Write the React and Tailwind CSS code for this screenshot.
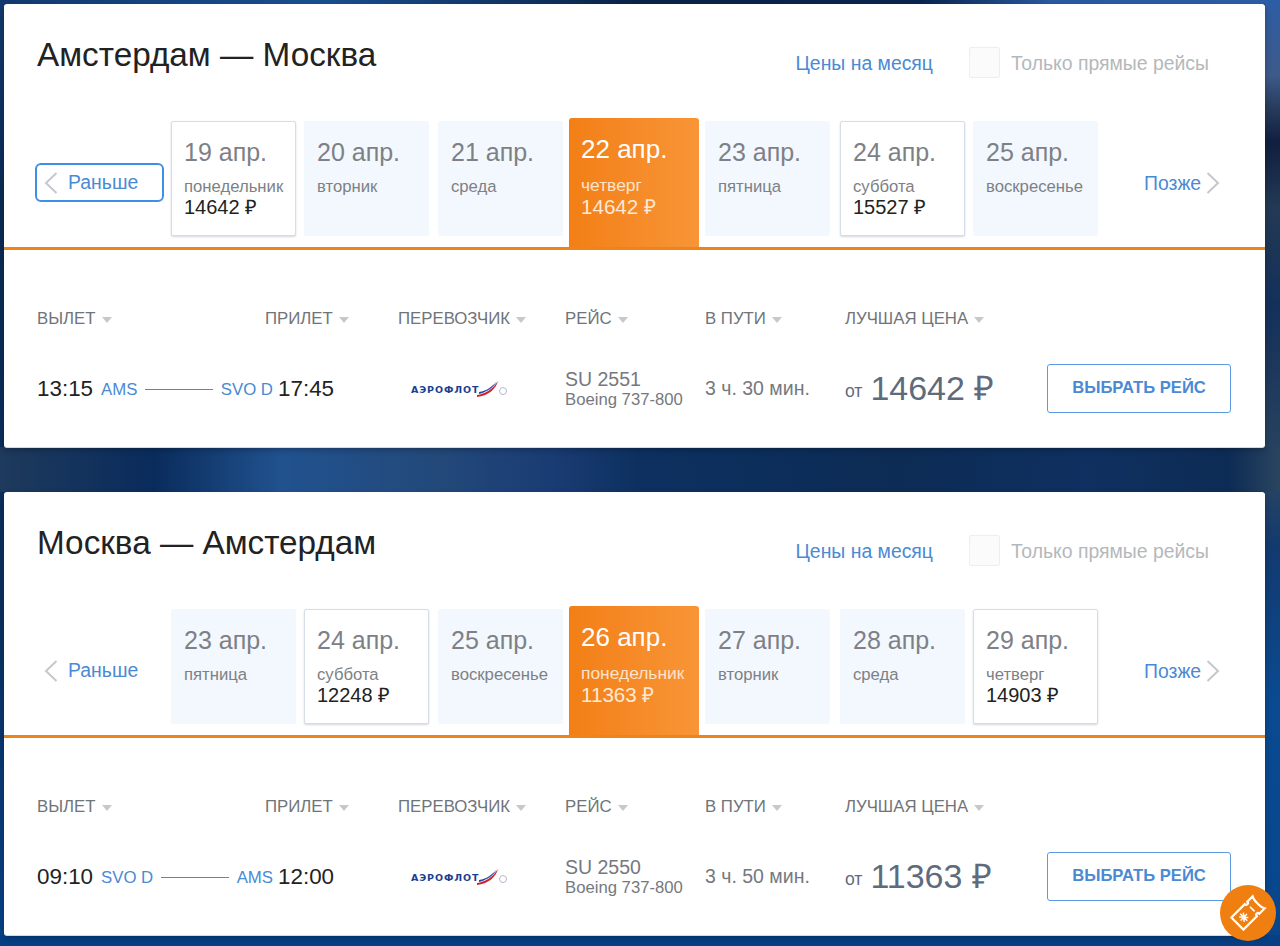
import { useId } from 'react';

const font = { fontFamily: '"Liberation Sans", Arial, sans-serif' };

const flights = [
  {
    title: 'Амстердам — Москва',
    focused: true,
    days: [
      { date: '19 апр.', day: 'понедельник', price: '14642 ₽', ml: 'ml-[7px]' },
      { date: '20 апр.', day: 'вторник', ml: 'ml-[8px]' },
      { date: '21 апр.', day: 'среда', ml: 'ml-[9px]' },
      { date: '22 апр.', day: 'четверг', price: '14642 ₽', active: true },
      { date: '23 апр.', day: 'пятница', ml: 'ml-[6px]' },
      { date: '24 апр.', day: 'суббота', price: '15527 ₽', ml: 'ml-[10px]' },
      { date: '25 апр.', day: 'воскресенье', ml: 'ml-[8px]' },
    ],
    depart: '13:15', from: 'AMS', to: 'SVO D', arrive: '17:45',
    flight: 'SU 2551', time: '3 ч. 30 мин.', price: '14642 ₽',
  },
  {
    title: 'Москва — Амстердам',
    days: [
      { date: '23 апр.', day: 'пятница', ml: 'ml-[7px]' },
      { date: '24 апр.', day: 'суббота', price: '12248 ₽', ml: 'ml-[8px]' },
      { date: '25 апр.', day: 'воскресенье', ml: 'ml-[9px]' },
      { date: '26 апр.', day: 'понедельник', price: '11363 ₽', active: true },
      { date: '27 апр.', day: 'вторник', ml: 'ml-[6px]' },
      { date: '28 апр.', day: 'среда', ml: 'ml-[10px]' },
      { date: '29 апр.', day: 'четверг', price: '14903 ₽', ml: 'ml-[8px]' },
    ],
    depart: '09:10', from: 'SVO D', to: 'AMS', arrive: '12:00',
    flight: 'SU 2550', time: '3 ч. 50 мин.', price: '11363 ₽',
  },
];

const columns = ['Вылет', 'Прилет', 'Перевозчик', 'Рейс', 'В пути', 'Лучшая цена'];

function Chevron({ dir }) {
  return (
    <svg width="14" height="22" viewBox="0 0 14 22" fill="none" className="shrink-0">
      <path
        d={dir === 'left' ? 'M12.5 1 L2 11 L12.5 21' : 'M1.5 1 L12 11 L1.5 21'}
        stroke="#c4c8cc"
        strokeWidth="2"
      />
    </svg>
  );
}

function DayTab({ item }) {
  if (item.active) {
    return (
      <div className="ml-[6px] h-[129px] w-[130px] self-end rounded-t-[3px] bg-gradient-to-r from-[#f37f14] to-[#f89536] px-[12px] pt-[14px] text-white">
        <div className="text-[26px] leading-[34px]">{item.date}</div>
        <div className="mt-[9px] text-[17.4px] leading-[20px] text-[#fde3c8]">{item.day}</div>
        <div className="text-[20.6px] leading-[24px] text-[#fde9d6]">{item.price}</div>
      </div>
    );
  }
  const box = item.price
    ? 'border border-[#d5dde8] bg-white px-[12px] pt-[13px] shadow-[0_1px_2px_rgba(80,100,130,0.25)]'
    : 'bg-[#f3f8fe] px-[13px] pt-[14px]';
  return (
    <div className={`${item.ml} mb-[11px] h-[115px] w-[125px] rounded-[2px] ${box}`}>
      <div className="text-[25px] leading-[34px] text-[#7d8186]">{item.date}</div>
      <div className="mt-[8px] text-[16.7px] leading-[20px] text-[#7d8186]">{item.day}</div>
      {item.price && <div className="text-[20px] leading-[21px] text-[#222]">{item.price}</div>}
    </div>
  );
}

function AeroflotLogo() {
  return (
    <div className="ml-[13px] flex items-center">
      <span className="font-['DejaVu_Sans'] text-[9.5px] font-bold leading-none tracking-[0.9px] text-[#1d3f8f]">АЭРОФЛОТ</span>
      <svg width="31" height="17" viewBox="0 0 31 17" className="-ml-[3px] -mt-[3px]">
        <path d="M1 15 C9 14 17 9 22 1 C20 9 12 16 1 17Z" fill="#d2232f" />
        <path d="M3 12 C10 11 16 7 21 1 C17 8 11 12 3 14Z" fill="#2a4a9f" />
        <circle cx="27" cy="11" r="3.5" fill="none" stroke="#a8b2c4" strokeWidth="0.9" />
      </svg>
    </div>
  );
}

function FlightCard({ data }) {
  return (
    <section className="mb-[45px] ml-[4px] h-[443px] w-[1261px] rounded-[3px] bg-white shadow-[0_1px_0_#cfdbe8,0_3px_6px_rgba(0,0,0,0.25)]">
      <header className="flex h-[114px] items-start pl-[33px]">
        <h2 className="mt-[30px] text-[33.3px] leading-[42px] text-[#222]">{data.title}</h2>
        <a className="ml-auto mt-[46px] text-[19.4px] leading-[26px] text-[#4a8ad4]">Цены на месяц</a>
        <div className="ml-[36px] mt-[43px] h-[31px] w-[31px] rounded-[2px] border border-[#eceef0] bg-[#fbfbfb]" />
        <span className="ml-[11px] mr-[56px] mt-[46px] text-[19.4px] leading-[26px] text-[#b5b8bb]">Только прямые рейсы</span>
      </header>

      <div className="flex h-[132px] items-end border-b-[3px] border-[#ee8418]">
        <div className="mb-[45px] ml-[31px] w-[129px] self-end">
          <div className={`flex h-[39px] items-center gap-[10px] rounded-[6px] border-2 pl-[7px] ${data.focused ? 'border-[#3f8fe6]' : 'border-transparent'}`}>
            <Chevron dir="left" />
            <span className="text-[19.4px] text-[#4a8ad4]">Раньше</span>
          </div>
        </div>
        {data.days.map(item => <DayTab key={item.date} item={item} />)}
        <div className="mb-[49px] ml-[46px] flex items-center gap-[5px]">
          <span className="text-[19.4px] leading-[30px] text-[#4a8ad4]">Позже</span>
          <Chevron dir="right" />
        </div>
      </div>

      <div className="grid grid-cols-[228px_133px_167px_140px_140px_202px_184px] pl-[33px] pt-[58px]">
        {columns.map(c => (
          <div key={c} className="flex h-[22px] items-center gap-[6px] text-[16.8px] uppercase text-[#6f7479]">
            {c}
            <span className="mt-[1px] h-0 w-0 border-x-[5.5px] border-t-[6px] border-x-transparent border-t-[#c6c9cc]" />
          </div>
        ))}
        <div />
        <div className="col-span-2 mt-[34px] flex h-[49px] items-center">
          <span className="w-[64px] text-[22.4px] text-[#222]">{data.depart}</span>
          <div className="flex w-[172px] items-center pt-[2px] text-[16.8px] text-[#4a8ad4]">
            {data.from}
            <span className="mx-[8px] h-px flex-1 bg-[#4a8ad4]" />
            {data.to}
          </div>
          <span className="ml-[5px] text-[22.4px] text-[#222]">{data.arrive}</span>
        </div>
        <div className="mt-[34px] flex h-[49px] items-center pt-[3px]"><AeroflotLogo /></div>
        <div className="mt-[34px] flex h-[49px] flex-col justify-center pt-[1px] text-[#75797e]">
          <div className="text-[19.5px] leading-[21px]">{data.flight}</div>
          <div className="text-[16.7px] leading-[20px]">Boeing 737-800</div>
        </div>
        <div className="mt-[34px] flex h-[49px] items-center text-[19.5px] text-[#75797e]">{data.time}</div>
        <div className="mt-[34px] flex h-[49px] items-center text-[#5f6b7c]">
          <span className="mt-[6px] text-[17.5px]">от</span>
          <span className="ml-[8px] text-[34px]">{data.price}</span>
        </div>
        <button className="mt-[34px] h-[49px] rounded-[3px] border-[1.5px] border-[#5b9ae0] text-[16.6px] font-bold uppercase text-[#4a8ad4]">
          Выбрать рейс
        </button>
      </div>
    </section>
  );
}

function TicketBadge() {
  const id = useId();
  return (
    <div className="absolute left-[1220px] top-[885px] flex h-[56px] w-[56px] items-center justify-center rounded-full bg-[#f07f12]">
      <svg width="40" height="40" viewBox="0 0 40 40" fill="none" stroke="#fff" strokeWidth="2.2" aria-labelledby={id}>
        <title id={id}>ticket</title>
        <g transform="rotate(-45 20 20)">
          <path d="M5 11.5 H24 C24 14 27.5 14 27.5 11.5 H35 C33 15 33 25 35 28.5 H27.5 C27.5 26 24 26 24 28.5 H5 Z" />
          <path d="M25.8 17 V23.5" strokeWidth="1.6" />
          <path d="M14 15 V25 M9.5 20 H18.5 M11 16.5 L14 20 L11 23.5 M17 16.5 L14 20 L17 23.5" strokeWidth="1.5" />
        </g>
      </svg>
    </div>
  );
}

export default function App() {
  return (
    <div
      style={font}
      className="relative h-[946px] w-[1280px] overflow-hidden pt-[4px] [background:linear-gradient(90deg,#123a70,#1a5090_25%,#0b2347_50%,#0a2550_72%,#2a5aa0_82%,#2d5da5)_0_0/100%_4px_no-repeat,linear-gradient(90deg,#1e3a5c,#0a2c5c_12%,#21528f_22%,#23497a_34%,#1a3c74_43%,#0d3060_50%,#0c2c55_70%,#0f3060_85%,#0d2c55_96%,#2a4560)_0_447px/100%_45px_no-repeat,linear-gradient(#063f85,#063f85)_0_935px/100%_11px_no-repeat,linear-gradient(180deg,#2d5da5,#3d5a8a_8%,#2a4060_11%,#101f3f_15%,#223a55_22%,#14305a_32%,#2a4560_50%,#123a70_58%,#0a4a90_74%,#08468c)_100%_0/15px_100%_no-repeat,linear-gradient(180deg,#123a70,#0a2a55_22%,#0a3060_65%,#08438a)]"
    >
      {flights.map(f => <FlightCard key={f.title} data={f} />)}
      <TicketBadge />
    </div>
  );
}
